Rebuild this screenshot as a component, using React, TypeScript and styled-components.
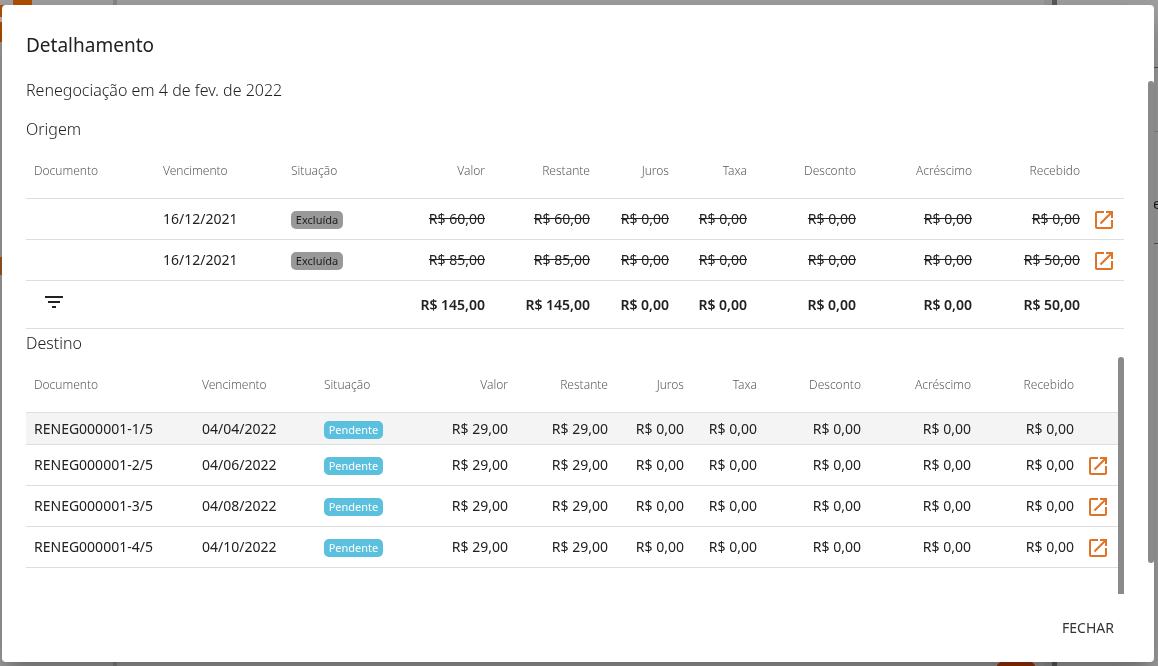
import React from 'react';
import styled, { createGlobalStyle } from 'styled-components';

const GlobalStyle = createGlobalStyle`
  *, *::before, *::after { box-sizing: border-box; }
  body {
    margin: 0;
    background: #a3a3a3;
    color: #212121;
    font-family: "Noto Sans", sans-serif;
    font-size: 14px;
  }
`;

/* Dimmed page behind the dialog */
const Behind = styled.div`
  position: fixed;
  inset: 0;
  display: flex;
  overflow: hidden;
  color: #1b1b1b;
`;
const SidePane = styled.div`
  width: 117px;
  border-right: 4px solid #8a8a8a;
`;
const MainPane = styled.div`
  flex: 1;
  border-right: 8px solid #9a9a9a;
`;
const DetailPane = styled.div`
  width: 106px;
  border-left: 5px solid #5c5c5c;
`;
const Mark = styled.div<{ $color: string }>`
  position: absolute;
  background: ${(p) => p.$color};
`;
const LogoTop = styled(Mark)`top: 0; left: 13px; width: 19px; height: 8px;`;
const LogoEdge = styled(Mark)`top: 5px; left: 0; width: 8px; height: 37px; border-top: 12px solid #b35000; border-bottom: 20px solid #b35000;`;
const SideTag = styled(Mark)`top: 257px; left: 0; width: 8px; height: 18px;`;
const FloatingAction = styled(Mark)`bottom: -36px; right: 121px; width: 42px; height: 42px; border-radius: 12px;`;
const Rule = styled(Mark)<{ $top: number }>`top: ${(p) => p.$top}px; right: 0; width: 12px; height: 1px;`;
const SideText = styled.span<{ $top: number }>`
  position: absolute;
  top: ${(p) => p.$top}px;
  right: -3px;
  line-height: 20px;
`;

const Overlay = styled.div`
  position: relative;
  display: flex;
  min-height: 100vh;
  padding: 5px 4px 4px 2px;
`;
const Dialog = styled.section`
  flex: 1;
  min-width: 0;
  display: flex;
  flex-direction: column;
  border-radius: 4px;
  background: #fff;
  box-shadow: 0 11px 15px -7px rgba(0, 0, 0, 0.2), 0 24px 38px 3px rgba(0, 0, 0, 0.14),
    0 9px 46px 8px rgba(0, 0, 0, 0.12);
`;
const Title = styled.h2`
  margin: 0;
  padding: 24px 24px 4px;
  font-size: 19px;
  font-weight: 400;
  line-height: 32px;
`;
const Body = styled.div`
  flex: 1;
  display: flex;
`;
const Content = styled.div`
  flex: 1;
  min-width: 0;
  display: flex;
  flex-direction: column;
  padding: 13px 24px 0;
`;
const BodyTrack = styled.div`
  width: 6px;
  display: flex;
  padding: 16px 0 31px;
`;
const Thumb = styled.div`
  flex: 1;
  border-radius: 3px 3px 0 0;
  background: #8a8a8a;
`;
const BodyThumb = styled(Thumb)`
  border-radius: 3px;
`;
const Lead = styled.p`
  margin: 0 0 13px;
  font-size: 16px;
  font-weight: 300;
  line-height: 24px;
`;
const Heading = styled.h3`
  margin: 2px 0;
  font-size: 16px;
  font-weight: 300;
  line-height: 24px;
`;
const ScrollArea = styled.div`
  flex: 1;
  display: flex;
  align-items: stretch;
`;
const TableSlot = styled.div`
  flex: 1;
  min-width: 0;
`;
const InnerTrack = styled.div`
  width: 6px;
  display: flex;
`;

const Table = styled.table`
  width: 100%;
  table-layout: fixed;
  border-collapse: separate;
  border-spacing: 0;
`;
const Column = styled.col<{ $width: number }>`
  width: ${(p) => p.$width}px;
`;
const HeadCell = styled.th<{ $numeric?: boolean }>`
  height: 56px;
  padding: 0 8px;
  border-bottom: 1px solid #dedede;
  color: #5c5c5c;
  font-size: 12px;
  font-weight: 300;
  text-align: ${(p) => (p.$numeric ? 'right' : 'left')};
`;
const Row = styled.tr<{ $highlight?: boolean }>`
  height: ${(p) => (p.$highlight ? 32 : 41)}px;
  background: ${(p) => (p.$highlight ? '#f4f4f4' : 'transparent')};
`;
const Cell = styled.td<{ $numeric?: boolean; $struck?: boolean }>`
  padding: 0 8px;
  border-bottom: 1px solid #dedede;
  line-height: 20px;
  white-space: nowrap;
  text-align: ${(p) => (p.$numeric ? 'right' : 'left')};
  text-decoration: ${(p) => (p.$struck ? 'line-through' : 'none')};
`;
const IconCell = styled(Cell)`
  padding: 2px 2px 0;
`;
const TotalRow = styled.tr`
  height: 48px;
`;
const TotalCell = styled(Cell)`
  font-weight: 600;
`;
const FilterCell = styled(Cell)`
  padding-top: 1px;
  vertical-align: top;
`;
const Badge = styled.span<{ $tone: 'excluded' | 'pending' }>`
  display: block;
  width: ${(p) => (p.$tone === 'excluded' ? 52 : 59)}px;
  margin-top: 2px;
  border-radius: 5px;
  background: ${(p) => (p.$tone === 'excluded' ? '#999' : '#5bc0de')};
  color: ${(p) => (p.$tone === 'excluded' ? '#212121' : '#fff')};
  font-size: 11px;
  line-height: 18px;
  text-align: center;
`;
const IconButton = styled.button<{ $size: number }>`
  display: flex;
  align-items: center;
  justify-content: center;
  width: ${(p) => p.$size}px;
  height: ${(p) => p.$size}px;
  padding: 0;
  border: 0;
  background: none;
  color: inherit;
  cursor: pointer;
`;
const OpenButton = styled(IconButton)`
  color: #e07325;
`;
const Actions = styled.footer`
  display: flex;
  justify-content: flex-end;
  padding: 15px 24px 17px;
`;
const CloseButton = styled.button`
  height: 36px;
  padding: 0 16px;
  border: 0;
  background: none;
  color: #333;
  font: inherit;
  cursor: pointer;
`;

const HEADERS = ['Documento', 'Vencimento', 'Situação', 'Valor', 'Restante', 'Juros', 'Taxa', 'Desconto', 'Acréscimo', 'Recebido'];
const ORIGIN_WIDTHS = [129, 128, 101, 109, 105, 79, 78, 109, 116, 108, 36];
const TARGET_WIDTHS = [168, 122, 95, 105, 100, 76, 73, 104, 110, 103, 36];

const zero = 'R$ 0,00';
const ORIGIN = [
  { due: '16/12/2021', values: ['R$ 60,00', 'R$ 60,00', zero, zero, zero, zero, zero] },
  { due: '16/12/2021', values: ['R$ 85,00', 'R$ 85,00', zero, zero, zero, zero, 'R$ 50,00'] },
];
const TOTALS = ['R$ 145,00', 'R$ 145,00', zero, zero, zero, zero, 'R$ 50,00'];
const TARGET = [
  { doc: 'RENEG000001-1/5', due: '04/04/2022' },
  { doc: 'RENEG000001-2/5', due: '04/06/2022' },
  { doc: 'RENEG000001-3/5', due: '04/08/2022' },
  { doc: 'RENEG000001-4/5', due: '04/10/2022' },
];
const TARGET_VALUES = ['R$ 29,00', 'R$ 29,00', zero, zero, zero, zero, zero];

function TableHead({ widths }: { widths: number[] }) {
  return (
    <>
      <colgroup>
        {widths.map((w, i) => (
          <Column key={i} $width={w} />
        ))}
      </colgroup>
      <thead>
        <tr>
          {HEADERS.map((h, i) => (
            <HeadCell key={h} scope="col" $numeric={i > 2}>{h}</HeadCell>
          ))}
          <HeadCell as="td" />
        </tr>
      </thead>
    </>
  );
}

function OpenLink() {
  return (
    <OpenButton type="button" $size={28} aria-label="Abrir documento">
      <svg width="24" height="24" viewBox="0 0 24 24" fill="currentColor" aria-hidden="true">
        <path d="M19 19H5V5h7V3H5c-1.11 0-2 .9-2 2v14c0 1.1.89 2 2 2h14c1.1 0 2-.9 2-2v-7h-2v7zM14 3v2h3.59l-9.83 9.83 1.41 1.41L19 6.41V10h2V3h-7z" />
      </svg>
    </OpenButton>
  );
}

export default function App() {
  return (
    <>
      <GlobalStyle />
      <Behind aria-hidden="true">
        <SidePane />
        <MainPane />
        <DetailPane />
        <LogoTop $color="#b35000" />
        <LogoEdge $color="#c0b0a8" />
        <SideTag $color="#a35a24" />
        <Rule $color="#555" $top={67} />
        <Rule $color="#888" $top={131} />
        <Rule $color="#555" $top={243} />
        <SideText $top={194}>e</SideText>
        <FloatingAction $color="#a53208" />
      </Behind>
      <Overlay>
        <Dialog role="dialog" aria-modal="true" aria-labelledby="dialog-title">
          <Title id="dialog-title">Detalhamento</Title>
          <Body>
            <Content>
              <Lead>Renegociação em 4 de fev. de 2022</Lead>
              <Heading>Origem</Heading>
              <Table aria-label="Origem">
                <TableHead widths={ORIGIN_WIDTHS} />
                <tbody>
                  {ORIGIN.map((row, r) => (
                    <Row key={r}>
                      <Cell />
                      <Cell>{row.due}</Cell>
                      <Cell><Badge $tone="excluded">Excluída</Badge></Cell>
                      {row.values.map((v, i) => (
                        <Cell key={i} $numeric $struck>{v}</Cell>
                      ))}
                      <IconCell><OpenLink /></IconCell>
                    </Row>
                  ))}
                </tbody>
                <tfoot>
                  <TotalRow>
                    <FilterCell>
                      <IconButton type="button" $size={40} aria-label="Filtrar">
                        <svg width="24" height="24" viewBox="0 0 24 24" fill="currentColor" aria-hidden="true">
                          <path d="M10 18h4v-2h-4v2zM3 6v2h18V6H3zm3 7h12v-2H6v2z" />
                        </svg>
                      </IconButton>
                    </FilterCell>
                    <Cell />
                    <Cell />
                    {TOTALS.map((v, i) => (
                      <TotalCell key={i} $numeric>{v}</TotalCell>
                    ))}
                    <Cell />
                  </TotalRow>
                </tfoot>
              </Table>
              <Heading>Destino</Heading>
              <ScrollArea>
                <TableSlot>
                  <Table aria-label="Destino">
                    <TableHead widths={TARGET_WIDTHS} />
                    <tbody>
                      {TARGET.map((row, r) => (
                        <Row key={row.doc} $highlight={r === 0}>
                          <Cell>{row.doc}</Cell>
                          <Cell>{row.due}</Cell>
                          <Cell><Badge $tone="pending">Pendente</Badge></Cell>
                          {TARGET_VALUES.map((v, i) => (
                            <Cell key={i} $numeric>{v}</Cell>
                          ))}
                          <IconCell>{r > 0 && <OpenLink />}</IconCell>
                        </Row>
                      ))}
                    </tbody>
                  </Table>
                </TableSlot>
                <InnerTrack><Thumb /></InnerTrack>
              </ScrollArea>
            </Content>
            <BodyTrack><BodyThumb /></BodyTrack>
          </Body>
          <Actions>
            <CloseButton type="button">FECHAR</CloseButton>
          </Actions>
        </Dialog>
      </Overlay>
    </>
  );
}
